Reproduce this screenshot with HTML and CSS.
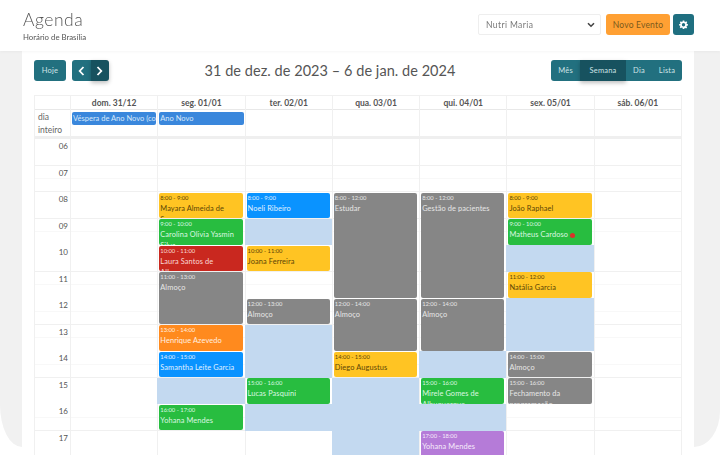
FILE: index.html
```html
<!DOCTYPE html>
<html lang="pt-BR">
<head>
  <meta charset="UTF-8">
  <title>Agenda</title>
  <link rel="stylesheet" href="styles.css">
</head>
<body>
<div class="page">

  <!-- Barra superior -->
  <header class="topbar">
    <div class="heading">
      <h1>Agenda</h1>
      <p>Horário de Brasília</p>
    </div>
    <div class="actions">
      <div class="select">
        <span>Nutri Maria</span>
        <svg width="8" height="6" viewBox="0 0 8 6"><path d="M1 1.2 4 4.2 7 1.2" fill="none" stroke="#444" stroke-width="1.6"/></svg>
      </div>
      <button class="btn-new">Novo Evento</button>
      <button class="btn-gear">
        <svg width="9" height="9" viewBox="0 0 24 24"><path fill="#fff" fill-rule="evenodd" d="M10 1h4l.6 3.2 1.9.8 2.7-1.8 2.8 2.8-1.8 2.7.8 1.9L24 11.2v3.6l-3.2.6-.8 1.9 1.8 2.7-2.8 2.8-2.7-1.8-1.9.8L14 24h-4l-.6-3.2-1.9-.8-2.7 1.8L2 19l1.8-2.7-.8-1.9L0 14.800v-3.600l3.200-.6.8-1.900L2.200 6 5 3.200 7.700 5l1.900-.8zM12 8a4.500 4.500 0 1 0 0 9 4.500 4.500 0 0 0 0-9z"/></svg>
      </button>
    </div>
  </header>

  <div class="content">
    <div class="gutter gutter-left"></div>

    <main class="card">
      <!-- Navegação do calendário -->
      <div class="toolbar">
        <div class="toolbar-left">
          <button class="btn btn-today">Hoje</button>
          <div class="btn-group">
            <button class="btn btn-icon">
              <svg width="7" height="10" viewBox="0 0 7 10"><path d="M5.500 1 1.700 5l3.800 4" fill="none" stroke="#fff" stroke-width="1.800"/></svg>
            </button>
            <button class="btn btn-icon active">
              <svg width="7" height="10" viewBox="0 0 7 10"><path d="M1.500 1l3.800 4-3.800 4" fill="none" stroke="#fff" stroke-width="1.800"/></svg>
            </button>
          </div>
        </div>
        <h2 class="range">31 de dez. de 2023 – 6 de jan. de 2024</h2>
        <div class="btn-group views">
          <button class="btn">Mês</button>
          <button class="btn active">Semana</button>
          <button class="btn">Dia</button>
          <button class="btn">Lista</button>
        </div>
      </div>

      <div class="calendar">
        <div class="week-head">
          <div></div>
          <div>dom. 31/12</div>
          <div>seg. 01/01</div>
          <div>ter. 02/01</div>
          <div>qua. 03/01</div>
          <div>qui. 04/01</div>
          <div>sex. 05/01</div>
          <div>sáb. 06/01</div>
        </div>

        <div class="all-day">
          <div class="all-day-label">dia inteiro</div>
          <div><div class="holiday">Véspera de Ano Novo (compensado)</div></div>
          <div><div class="holiday">Ano Novo</div></div>
          <div></div>
          <div></div>
          <div></div>
          <div></div>
          <div></div>
        </div>

        <div class="week-body">
          <div class="hours">
            <div>06</div><div>07</div><div>08</div><div>09</div><div>10</div><div>11</div>
            <div>12</div><div>13</div><div>14</div><div>15</div><div>16</div><div>17</div>
          </div>

          <div class="day"></div>

          <div class="day">
            <div class="ev yellow at-8 h1"><small>8:00 - 9:00</small><b>Mayara Almeida de Souza</b></div>
            <div class="ev green at-9 h1"><small>9:00 - 10:00</small><b>Carolina Olivia Yasmin Silva</b></div>
            <div class="ev red at-10 h1"><small>10:00 - 11:00</small><b>Laura Santos de Albuquerque</b></div>
            <div class="ev gray at-11 h2"><small>11:00 - 13:00</small><b>Almoço</b></div>
            <div class="ev orange at-13 h1"><small>13:00 - 14:00</small><b>Henrique Azevedo</b></div>
            <div class="ev blue at-14 h1"><small>14:00 - 15:00</small><b>Samantha Leite Garcia</b></div>
            <div class="free at-15 h1"></div>
            <div class="ev green at-16 h1"><small>16:00 - 17:00</small><b>Yohana Mendes</b></div>
          </div>

          <div class="day">
            <div class="ev blue at-8 h1"><small>8:00 - 9:00</small><b>Noeli Ribeiro</b></div>
            <div class="free at-9 h1"></div>
            <div class="ev yellow at-10 h1"><small>10:00 - 11:00</small><b>Joana Ferreira</b></div>
            <div class="ev gray at-12 h1"><small>12:00 - 13:00</small><b>Almoço</b></div>
            <div class="free at-13 h2"></div>
            <div class="ev green at-15 h1"><small>15:00 - 16:00</small><b>Lucas Pasquini</b></div>
            <div class="free at-16 h1"></div>
          </div>

          <div class="day">
            <div class="ev gray at-8 h4"><small>8:00 - 12:00</small><b>Estudar</b></div>
            <div class="ev gray at-12 h2"><small>12:00 - 14:00</small><b>Almoço</b></div>
            <div class="ev yellow at-14 h1"><small>14:00 - 15:00</small><b>Diego Augustus</b></div>
            <div class="free at-15 h3"></div>
          </div>

          <div class="day">
            <div class="ev gray at-8 h4"><small>8:00 - 12:00</small><b>Gestão de pacientes</b></div>
            <div class="ev gray at-12 h2"><small>12:00 - 14:00</small><b>Almoço</b></div>
            <div class="free at-14 h1"></div>
            <div class="ev green at-15 h1"><small>15:00 - 16:00</small><b>Mirele Gomes de Albuquerque</b></div>
            <div class="free at-16 h1"></div>
            <div class="ev purple at-17 h1"><small>17:00 - 18:00</small><b>Yohana Mendes</b></div>
          </div>

          <div class="day">
            <div class="ev yellow at-8 h1"><small>8:00 - 9:00</small><b>João Raphael</b></div>
            <div class="ev green at-9 h1"><small>9:00 - 10:00</small><b>Matheus Cardoso <i class="flag"></i></b></div>
            <div class="free at-10 h1"></div>
            <div class="ev yellow at-11 h1"><small>11:00 - 12:00</small><b>Natália Garcia</b></div>
            <div class="free at-12 h2"></div>
            <div class="ev gray at-14 h1"><small>14:00 - 15:00</small><b>Almoço</b></div>
            <div class="ev gray at-15 h1"><small>15:00 - 16:00</small><b>Fechamento da programação</b></div>
          </div>

          <div class="day"></div>
        </div>
      </div>
    </main>

    <div class="gutter gutter-right"></div>
  </div>
</div>
</body>
</html>
```

FILE: styles.css
```css
/* Geral */
html, body {
  margin: 0;
  height: 455px;
  overflow: hidden;
  background: #fff;
}

.page {
  font-family: "Lato", "Open Sans", sans-serif;
  color: #555;
  height: 455px;
  overflow: hidden;
  filter: blur(0.6px);
}

button {
  font-family: inherit;
  border: none;
  padding: 0;
}

/* Barra superior */
.topbar {
  height: 51px;
  box-sizing: border-box;
  padding: 14px 26px 0 23px;
  display: flex;
  justify-content: space-between;
  align-items: flex-start;
  background: #fff;
  position: relative;
  box-shadow: 0 1px 3px rgba(0, 0, 0, 0.04);
}

.heading h1 {
  margin: -4px 0 0;
  font-size: 17.500px;
  line-height: 20px;
  font-weight: 300;
  letter-spacing: 0.5px;
  color: #555;
}

.heading p {
  margin: 2px 0 0;
  font-size: 7.800px;
  line-height: 10px;
  color: #555;
}

.actions {
  display: flex;
  gap: 5px;
  align-items: flex-start;
}

.select {
  width: 123px;
  height: 21px;
  box-sizing: border-box;
  padding: 0 5px 0 7px;
  display: flex;
  align-items: center;
  justify-content: space-between;
  border: 1px solid #eee;
  border-radius: 2px;
  font-size: 8.500px;
  letter-spacing: 0.4px;
  color: #777;
}

.btn-new {
  width: 64px;
  height: 21px;
  background: #ffa033;
  color: #7c5a1c;
  font-size: 8.500px;
  letter-spacing: 0.2px;
  border-radius: 3px;
}

.btn-gear {
  width: 21px;
  height: 21px;
  margin-left: -2px;
  background: #1f6f80;
  border-radius: 3px;
  display: flex;
  align-items: center;
  justify-content: center;
}

/* Conteúdo */
.content {
  display: flex;
  align-items: flex-start;
}

.gutter {
  height: 396px;
  background: #f1f1f1;
}

.gutter-left {
  width: 22px;
  border-bottom-left-radius: 22px 42px;
}

.gutter-right {
  width: 26px;
  border-bottom-right-radius: 26px 36px;
}

.card {
  flex: 1;
  min-width: 0;
  height: 404px;
  box-sizing: border-box;
  padding: 9px 12px 0;
  background: #fff;
  overflow: hidden;
}

/* Navegação */
.toolbar {
  display: flex;
  justify-content: space-between;
  align-items: center;
  height: 21px;
}

.toolbar-left {
  display: flex;
  gap: 6px;
}

.range {
  margin: 0;
  font-size: 14.500px;
  font-weight: 400;
  letter-spacing: 0.05px;
  color: #555;
  white-space: nowrap;
}

.btn {
  height: 21px;
  background: #22707f;
  color: #cfe3e6;
  font-size: 7.500px;
  border-radius: 3px;
  padding: 0 7px;
  letter-spacing: 0.2px;
}

.btn-today {
  width: 32px;
  padding: 0;
}

.btn-group {
  display: flex;
}

.btn-group .btn {
  border-radius: 0;
}

.btn-group .btn:first-child {
  border-radius: 3px 0 0 3px;
}

.btn-group .btn:last-child {
  border-radius: 0 3px 3px 0;
}

.btn-group .btn.active {
  background: #17525f;
  box-shadow: 0 2px 4px rgba(0, 0, 0, 0.25);
}

.btn-icon {
  width: 18.500px;
  padding: 0;
  display: flex;
  align-items: center;
  justify-content: center;
}

.views .btn:nth-child(1) { width: 29px; padding: 0; }
.views .btn:nth-child(2) { width: 46px; padding: 0; }
.views .btn:nth-child(3) { width: 26px; padding: 0; }
.views .btn:nth-child(4) { width: 30px; padding: 0; }

/* Calendário */
.calendar {
  margin-top: 14px;
  border-left: 1px solid #f0f0f0;
  border-right: 1px solid #f0f0f0;
}

.week-head,
.all-day,
.week-body {
  display: grid;
  grid-template-columns: 35px repeat(7, minmax(0, 1fr));
}

.week-head {
  height: 15px;
  border-top: 1px solid #f0f0f0;
  border-bottom: 1px solid #e8e8e8;
  box-sizing: border-box;
  font-size: 8.500px;
  font-weight: 700;
  line-height: 14px;
  text-align: center;
  color: #555;
}

.week-head > div,
.all-day > div {
  border-left: 1px solid #f0f0f0;
}

.week-head > div:first-child,
.all-day > div:first-child {
  border-left: none;
}

.all-day {
  height: 29px;
  box-sizing: border-box;
  border-bottom: 3px solid #efefef;
}

.all-day-label {
  font-size: 8.500px;
  line-height: 13px;
  padding: 1px 0 0 3px;
  width: 20px;
  color: #666;
}

.holiday {
  margin: 2px 1px 0 1px;
  height: 13px;
  box-sizing: border-box;
  padding-left: 1px;
  background: #3a87dc;
  color: #d8e8fa;
  font-size: 7.500px;
  line-height: 13px;
  border-radius: 2px;
  white-space: nowrap;
  overflow: hidden;
}

.week-body {
  background: repeating-linear-gradient(to bottom,
    transparent 0, transparent 12.650px,
    #f8f8f8 12.650px, #f8f8f8 13.275px,
    transparent 13.275px, transparent 25.925px,
    #f0f0f0 25.925px, #f0f0f0 26.550px);
}

.hours > div {
  height: 26.550px;
  box-sizing: border-box;
  padding: 1px 2px 0 0;
  font-size: 8px;
  line-height: 12px;
  text-align: right;
  color: #555;
}

.day {
  display: grid;
  grid-template-rows: repeat(24, 13.275px);
  border-left: 1px solid #f0f0f0;
}

/* Eventos */
.ev {
  margin: 0.5px 2px 0.5px 1px;
  padding: 0 1px;
  border-radius: 2px;
  overflow: hidden;
  min-height: 0;
}

.ev small {
  display: block;
  font-size: 5.800px;
  line-height: 9px;
}

.ev b {
  display: block;
  margin-top: 1px;
  font-size: 7.400px;
  line-height: 11px;
  font-weight: 400;
  letter-spacing: 0.1px;
}

.free {
  background: #c3d9f0;
  margin-left: -1px;
}

.yellow { background: #ffc423; color: #5c4406; }
.green { background: #28bd40; color: #dcf7e0; }
.red { background: #c9281f; color: #f9d8d5; }
.gray { background: #868686; color: #e6e6e6; }
.orange { background: #ff8a1e; color: #fff0e0; }
.blue { background: #0a93ff; color: #e0f1ff; }
.purple { background: #b57bd8; color: #f6ecfb; }

.flag {
  display: inline-block;
  width: 5px;
  height: 5px;
  border-radius: 50%;
  background: #d9332a;
  vertical-align: -0.5px;
}

/* Posição na grade: cada hora ocupa duas linhas a partir das 06 */
.at-8 { grid-row-start: 5; }
.at-9 { grid-row-start: 7; }
.at-10 { grid-row-start: 9; }
.at-11 { grid-row-start: 11; }
.at-12 { grid-row-start: 13; }
.at-13 { grid-row-start: 15; }
.at-14 { grid-row-start: 17; }
.at-15 { grid-row-start: 19; }
.at-16 { grid-row-start: 21; }
.at-17 { grid-row-start: 23; }

.h1 { grid-row-end: span 2; }
.h2 { grid-row-end: span 4; }
.h3 { grid-row-end: span 6; }
.h4 { grid-row-end: span 8; }

.day > * { grid-column: 1; }
```
